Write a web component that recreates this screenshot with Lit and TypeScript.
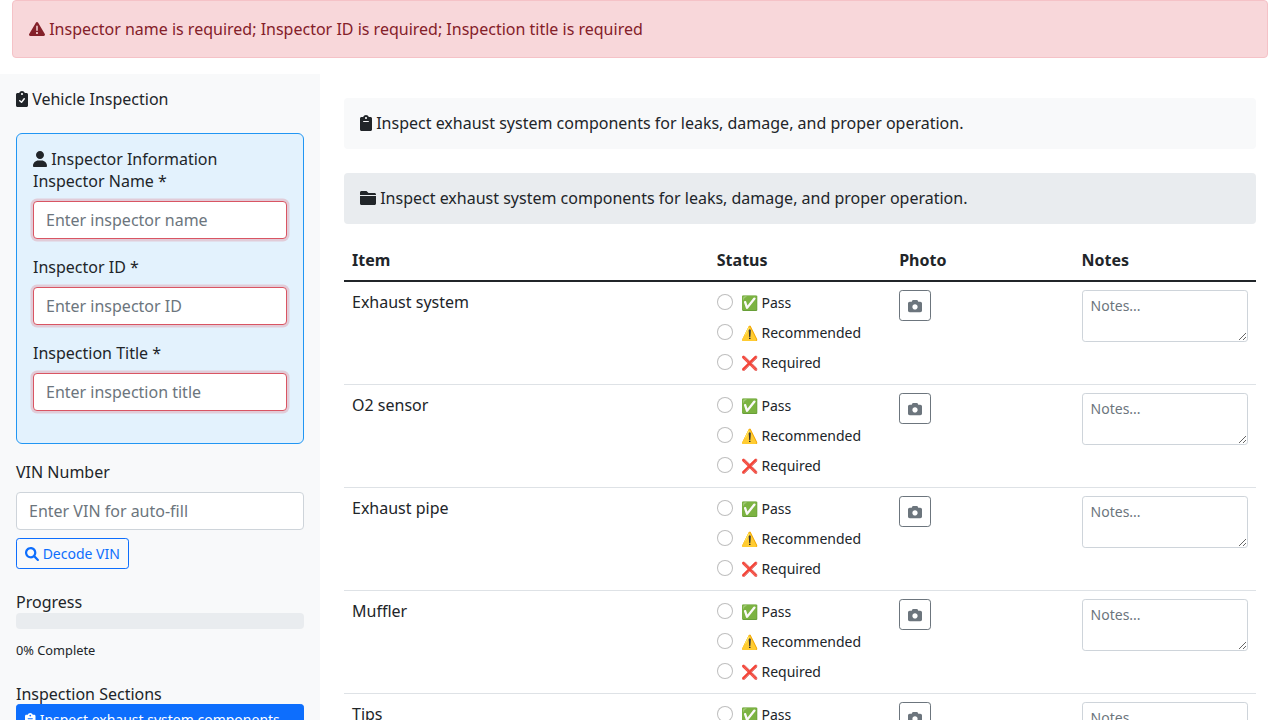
import { LitElement, html, css, svg } from "lit";
import { customElement, property } from "lit/decorators.js";

const ICONS: Record<string, { w: number; d: string }> = {
  warning: {
    w: 512,
    d: "M506.3 417l-213.3-364c-16.33-28-57.54-28-73.98 0l-213.2 364C-10.59 444.9 9.849 480 42.74 480h426.6C502.1 480 522.6 445 506.3 417zM232 168c0-13.25 10.75-24 24-24S280 154.8 280 168v128c0 13.25-10.75 24-23.1 24S232 309.3 232 296V168zM256 416c-17.36 0-31.44-14.08-31.44-31.44c0-17.36 14.07-31.44 31.44-31.44s31.44 14.08 31.44 31.44C287.4 401.9 273.4 416 256 416z",
  },
  clipboardCheck: {
    w: 384,
    d: "M336 64h-53.88C268.9 26.8 233.7 0 192 0S115.1 26.8 101.9 64H48C21.5 64 0 85.48 0 112v352C0 490.5 21.5 512 48 512h288c26.5 0 48-21.48 48-48v-352C384 85.48 362.5 64 336 64zM192 64c17.67 0 32 14.33 32 32s-14.33 32-32 32S160 113.7 160 96S174.3 64 192 64zM282.9 262.8l-88 112c-4.047 5.156-10.02 8.438-16.53 9.062C177.6 383.1 176.8 384 176 384c-5.703 0-11.25-2.031-15.62-5.781l-56-48c-10.06-8.625-11.22-23.78-2.594-33.84c8.609-10.06 23.77-11.22 33.84-2.594l36.98 31.69l72.52-92.28c8.188-10.44 23.3-12.22 33.7-4.062C289.3 237.3 291.1 252.4 282.9 262.8z",
  },
  clipboard: {
    w: 384,
    d: "M336 64h-53.88C268.9 26.8 233.7 0 192 0S115.1 26.8 101.9 64H48C21.5 64 0 85.48 0 112v352C0 490.5 21.5 512 48 512h288c26.5 0 48-21.48 48-48v-352C384 85.48 362.5 64 336 64zM192 64c17.67 0 32 14.33 32 32c0 17.67-14.33 32-32 32S160 113.7 160 96C160 78.33 174.3 64 192 64zM272 224h-160C103.2 224 96 216.8 96 208C96 199.2 103.2 192 112 192h160C280.8 192 288 199.2 288 208S280.8 224 272 224z",
  },
  user: {
    w: 448,
    d: "M224 256c70.7 0 128-57.31 128-128s-57.3-128-128-128C153.3 0 96 57.31 96 128S153.3 256 224 256zM274.7 304H173.3C77.61 304 0 381.6 0 477.3c0 19.14 15.52 34.67 34.66 34.67h378.7C432.5 512 448 496.5 448 477.3C448 381.6 370.4 304 274.7 304z",
  },
  search: {
    w: 512,
    d: "M500.3 443.7l-119.7-119.7c27.22-40.41 40.65-90.9 33.46-144.7C401.8 87.79 326.8 13.32 235.2 1.723C99.01-15.51-15.51 99.01 1.724 235.2c11.6 91.64 86.08 166.7 177.6 178.9c53.8 7.189 104.3-6.236 144.7-33.46l119.7 119.7c15.62 15.62 40.95 15.62 56.57 0C515.9 484.7 515.9 459.3 500.3 443.7zM79.1 208c0-70.58 57.42-128 128-128s128 57.42 128 128c0 70.58-57.42 128-128 128S79.1 278.6 79.1 208z",
  },
  folder: {
    w: 512,
    d: "M464 96h-192l-64-64H48C21.5 32 0 53.5 0 80V160h512V144C512 117.5 490.5 96 464 96zM0 432C0 458.5 21.5 480 48 480h416c26.5 0 48-21.5 48-48V192H0V432z",
  },
  camera: {
    w: 512,
    d: "M194.6 32H317.4C338.1 32 356.4 45.22 362.9 64.82L373.3 96H448C483.3 96 512 124.7 512 160V416C512 451.3 483.3 480 448 480H64C28.65 480 0 451.3 0 416V160C0 124.7 28.65 96 64 96H138.7L149.1 64.82C155.6 45.22 173.9 32 194.6 32H194.6zM256 384C309 384 352 341 352 288C352 234.1 309 192 256 192C202.1 192 160 234.1 160 288C160 341 202.1 384 256 384z",
  },
};

const SECTION = "Inspect exhaust system components for leaks, damage, and proper operation.";
const ITEMS = ["Exhaust system", "O2 sensor", "Exhaust pipe", "Muffler", "Tips"];
const STATUSES = ["✅ Pass", "⚠️ Recommended", "❌ Required"];
const FIELDS = [
  { label: "Inspector Name *", hint: "Enter inspector name" },
  { label: "Inspector ID *", hint: "Enter inspector ID" },
  { label: "Inspection Title *", hint: "Enter inspection title" },
];

@customElement("fa-icon")
class FaIcon extends LitElement {
  @property() name = "";
  static styles = css`
    :host { display: inline-block; line-height: 1; vertical-align: -0.125em; }
    .glyph { display: block; height: 1em; fill: currentColor; overflow: visible; }
  `;
  render() {
    const icon = ICONS[this.name];
    if (!icon) return null;
    return html`<svg class="glyph" viewBox="0 0 ${icon.w} 512">${svg`<path d=${icon.d}></path>`}</svg>`;
  }
}

@customElement("app-root")
class AppRoot extends LitElement {
  static styles = css`
    :host {
      display: block; height: 100vh; overflow: hidden; background: #fff; color: #212529;
      font: 400 16px/1.5 "Noto Sans", "Liberation Sans", sans-serif;
    }
    *, *::before, *::after { box-sizing: border-box; }
    input, textarea, button { font: inherit; margin: 0; }
    .alert {
      margin: 0 12px 16px; padding: 16px; color: #842029; background: #f8d7da;
      border: 1px solid #f5c2c7; border-radius: 4px;
    }
    .layout { display: flex; align-items: stretch; }
    .sidebar { flex: 0 0 320px; padding: 16px; background: #f8f9fa; }
    .main { flex: 1; min-width: 0; padding: 24px; }
    .title { margin: 0; font-size: 16px; font-weight: 400; line-height: 1.2; }
    .brand { margin-bottom: 24px; }
    .inspector {
      padding: 16px; margin-bottom: 16px; background: #e3f2fd;
      border: 1px solid #2196f3; border-radius: 6px;
    }
    .field { margin-bottom: 16px; }
    .label { display: block; margin-bottom: 8px; }
    .control {
      display: block; width: 100%; height: 38px; padding: 6px 12px; color: #212529; background: #fff;
      border: 1px solid #ced4da; border-radius: 4px; outline: 0;
    }
    .control::placeholder, .notes::placeholder { color: #6c757d; opacity: 1; }
    .invalid { border-color: #d95563; box-shadow: 0 0 0 2.5px rgba(220, 53, 69, 0.2); }
    .btn {
      display: inline-block; padding: 4px 8px; font-size: 14px; line-height: 21px;
      border: 1px solid; border-radius: 3.2px; background: transparent; vertical-align: top;
    }
    .decode { margin: 8px 0 24px; color: #0d6efd; border-color: #0d6efd; }
    .shot { color: #6c757d; border-color: #6c757d; }
    .track { height: 16px; margin-bottom: 8px; background: #e9ecef; border-radius: 4px; }
    .complete { margin-bottom: 24px; }
    .small { font-size: 12.8px; }
    .nav { display: block; width: 100%; text-align: left; color: #fff; background: #0d6efd; border-color: #0d6efd; }
    .nav fa-icon { margin-right: 0.5px; }
    .banner { padding: 16px; border-radius: 4px; background: #f8f9fa; margin-bottom: 24px; }
    .category { background: #e9ecef; margin-bottom: 16px; }
    .table { width: 100%; table-layout: fixed; border-collapse: collapse; }
    .table th { padding: 8px; text-align: left; font-weight: 700; border-bottom: 2px solid #212529; }
    .table td { padding: 8px; vertical-align: top; border-bottom: 1px solid #dee2e6; }
    .wide { width: 40%; }
    .col { width: 20%; }
    .statuses { display: grid; gap: 4px; }
    .check { display: flex; gap: 8px; height: 26px; }
    .radio {
      appearance: none; flex: none; width: 16px; height: 16px; margin-top: 4px; background: #fff;
      border: 1px solid rgba(0, 0, 0, 0.25); border-radius: 50%;
    }
    .option { font-size: 14px; line-height: 26px; white-space: nowrap; }
    .notes {
      display: block; width: 100%; height: 52px; padding: 4px 8px; font-size: 14px; line-height: 21px;
      color: #212529; background: #fff; border: 1px solid #ced4da; border-radius: 3.2px; resize: vertical;
    }
  `;

  render() {
    return html`
      <div class="alert"><fa-icon name="warning"></fa-icon> Inspector name is required; Inspector ID is required; Inspection title is required</div>
      <div class="layout">
        <aside class="sidebar">
          <h5 class="title brand"><fa-icon name="clipboardCheck"></fa-icon> Vehicle Inspection</h5>
          <section class="inspector">
            <h6 class="title"><fa-icon name="user"></fa-icon> Inspector Information</h6>
            ${FIELDS.map((f) => html`<div class="field">
              <label class="label">${f.label}</label>
              <input class="control invalid" placeholder=${f.hint} />
            </div>`)}
          </section>
          <label class="label">VIN Number</label>
          <input class="control" placeholder="Enter VIN for auto-fill" />
          <button class="btn decode"><fa-icon name="search"></fa-icon> Decode VIN</button>
          <h6 class="title">Progress</h6>
          <div class="track"></div>
          <div class="complete"><span class="small">0% Complete</span></div>
          <h6 class="title">Inspection Sections</h6>
          <button class="btn nav"><fa-icon name="clipboard"></fa-icon> ${SECTION}</button>
        </aside>
        <main class="main">
          <div class="banner"><h4 class="title"><fa-icon name="clipboard"></fa-icon> ${SECTION}</h4></div>
          <div class="banner category"><h5 class="title"><fa-icon name="folder"></fa-icon> ${SECTION}</h5></div>
          <table class="table">
            <thead>
              <tr><th class="wide">Item</th><th class="col">Status</th><th class="col">Photo</th><th class="col">Notes</th></tr>
            </thead>
            <tbody>
              ${ITEMS.map((item) => html`<tr>
                <td>${item}</td>
                <td><div class="statuses">${STATUSES.map((s) => html`<label class="check">
                  <input class="radio" type="radio" name=${item} /><span class="option">${s}</span>
                </label>`)}</div></td>
                <td><button class="btn shot"><fa-icon name="camera"></fa-icon></button></td>
                <td><textarea class="notes" placeholder="Notes..."></textarea></td>
              </tr>`)}
            </tbody>
          </table>
        </main>
      </div>
    `;
  }
}
